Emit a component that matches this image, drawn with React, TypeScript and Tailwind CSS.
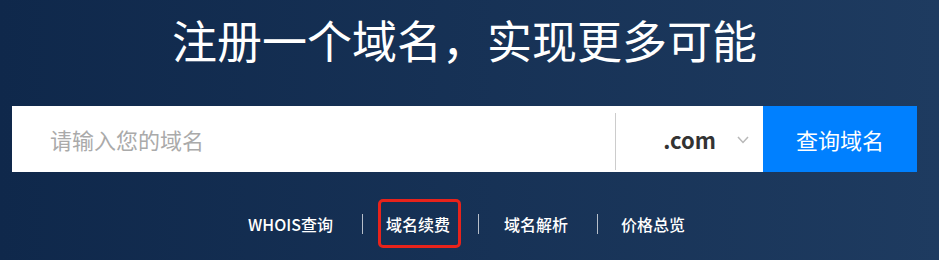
export default function App() {
  return (
    <div
      className="w-full h-[260px] overflow-hidden bg-[linear-gradient(90deg,#0f284b,#1e3b60)] text-white"
      style={{ fontFamily: '"Noto Sans CJK SC", "Noto Sans", sans-serif' }}
    >
      {/* Headline */}
      <h1 className="pt-[10px] h-[70px] text-center text-[45px] leading-[60px] font-normal pr-[10px]">
        注册一个域名，实现更多可能
      </h1>

      {/* Search bar */}
      <div className="mt-[36px] ml-[12px] w-[905px] h-[66px] flex bg-white">
        <div className="flex-1 flex items-center pl-[38px] text-[22px] text-[#aaaaaa]">
          请输入您的域名
        </div>
        <div className="w-px h-[57px] mt-[7px] bg-[#cccccc]" />
        <div className="w-[147px] flex items-center justify-end pr-[14px]">
          <span className="text-[22px] font-bold text-[#333333]">.com</span>
          <svg width="12" height="8" viewBox="0 0 12 8" className="ml-[21px] mt-[2px]">
            <polyline points="1,1 6,6.5 11,1" fill="none" stroke="#b8b8b8" strokeWidth="1.5" />
          </svg>
        </div>
        <button className="w-[154px] bg-[#0080ff] text-white text-[22px]">查询域名</button>
      </div>

      {/* Quick links */}
      <div className="mt-[27px] flex items-center justify-center pr-[6px] text-[16px] font-medium">
        <span>WHOIS查询</span>
        <span className="w-px h-[20px] ml-[29px] mr-[15px] bg-[#b7bfca]" />
        <span className="h-[49px] flex items-center border-[3px] border-[#e8231b] rounded-[5px] pl-[5px] pr-[8px]">
          域名续费
        </span>
        <span className="w-px h-[20px] ml-[17px] mr-[25px] bg-[#b7bfca]" />
        <span>域名解析</span>
        <span className="w-px h-[20px] ml-[29px] mr-[23px] bg-[#b7bfca]" />
        <span>价格总览</span>
      </div>
    </div>
  );
}
